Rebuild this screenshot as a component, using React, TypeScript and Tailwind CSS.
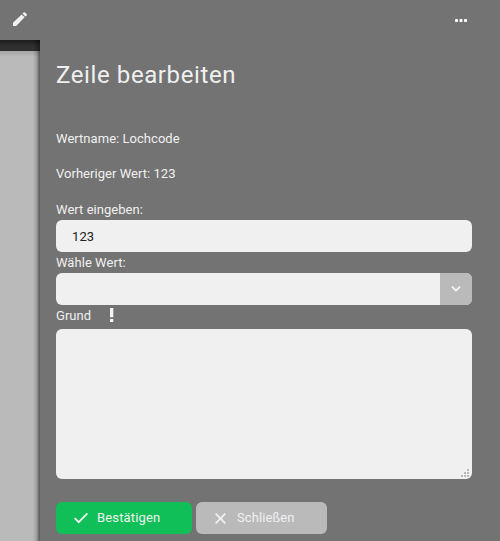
function PencilIcon() {
  return (
    <svg className="block h-[18px] w-[18px]" viewBox="0 0 18 18" fill="#f0f0f0">
      <path d="M2 12.7 10.6 4.4 13.6 7.3 5.2 16H2z" />
      <path d="m11.4 3.6 1.1-1.1c.5-.5 1-.5 1.5 0l1.6 1.6c.5.5.5 1 0 1.5l-1.1 1.1z" />
    </svg>
  );
}

function ResizeGrip() {
  return (
    <svg className="block h-[9px] w-[9px]" viewBox="0 0 9 9" fill="#b9b9b9" shapeRendering="crispEdges">
      <rect x="6" y="0" width="2" height="2" />
      <rect x="3" y="3" width="2" height="2" />
      <rect x="6" y="3" width="2" height="2" />
      <rect x="0" y="6" width="2" height="2" />
      <rect x="3" y="6" width="2" height="2" />
      <rect x="6" y="6" width="2" height="2" />
    </svg>
  );
}

export default function App() {
  return (
    <div className="flex h-[541px] w-[500px] overflow-hidden bg-[#737373] font-['Roboto',sans-serif] text-[13px] leading-4 tracking-[0.04px] text-[#f0f0f0]">
      <aside className="flex w-10 shrink-0 flex-col">
        <div className="h-10 pl-[11px] pt-[10px]">
          <PencilIcon />
        </div>
        <div className="flex h-[11px] justify-end bg-linear-to-b from-[#1c1c1c] to-[#303030] to-[6px]">
          <div className="w-[7px] bg-linear-to-r from-transparent to-black/40" />
        </div>
        <div className="flex flex-1 justify-end bg-linear-to-b from-[#a3a3a3] to-[#bababa] to-[6px]">
          <div className="w-[7px] bg-linear-to-r from-transparent via-black/15 via-50% to-black/55" />
        </div>
      </aside>
      <main className="flex flex-1 flex-col pl-4 pr-7">
        <div className="flex h-10 items-center justify-end pr-[5px]">
          <svg className="h-3 w-3" viewBox="0 0 12 12" fill="#ffffff">
            <rect x="0" y="5" width="3" height="3" rx="0.8" />
            <rect x="4.5" y="5" width="3" height="3" rx="0.8" />
            <rect x="9" y="5" width="3" height="3" rx="0.8" />
          </svg>
        </div>
        <h1 className="mt-[19px] h-8 text-2xl leading-8 tracking-[0.6px]">Zeile bearbeiten</h1>
        <p className="mt-10">Wertname: Lochcode</p>
        <p className="mt-[19px] tracking-[0.04px]">Vorheriger Wert: 123</p>
        <label className="mt-5 h-[18px]">Wert eingeben:</label>
        <div className="flex h-8 items-center rounded-md bg-[#f0f0f0] px-4 pt-[2px] tracking-[0.1px] text-[#222]">123</div>
        <label className="mt-[3px] h-[18px]">Wähle Wert:</label>
        <div className="flex h-8 overflow-hidden rounded-md bg-[#f0f0f0]">
          <div className="flex-1" />
          <div className="flex w-8 items-center justify-center bg-[#bababa]">
            <svg className="h-[10px] w-[10px]" viewBox="0 0 10 10" fill="none" stroke="#f5f5f5" strokeWidth="1.8">
              <path d="m.9 2.6 4.1 4 4.1-4" />
            </svg>
          </div>
        </div>
        <div className="mt-[3px] flex h-[21px]">
          <span className="w-[53px]">Grund</span>
          <svg className="h-4 w-[5px]" viewBox="0 0 5 16" fill="#f5f5f5">
            <path d="M1 0h3.3v9.3H1zM1 11h3.3v3H1z" />
          </svg>
        </div>
        <div className="flex h-[150px] items-end justify-end rounded-md bg-[#f0f0f0] pb-px pr-[2px]">
          <ResizeGrip />
        </div>
        <div className="mt-[23px] flex gap-1">
          <button className="flex h-8 w-[136px] items-center rounded-md bg-[#10bf57] pl-[18px] tracking-[0.15px]">
            <svg className="mr-[9px] h-3 w-[14px]" viewBox="0 0 14 12" fill="none" stroke="#f0f0f0" strokeWidth="1.8">
              <path d="m.7 6.2 4 4L13.4 1.4" />
            </svg>
            Bestätigen
          </button>
          <button className="flex h-8 w-[131px] items-center rounded-md bg-[#bababa] pl-[19px] tracking-[0.1px]">
            <svg className="mr-[11px] h-[11px] w-[11px]" viewBox="0 0 11 11" fill="none" stroke="#f0f0f0" strokeWidth="1.7">
              <path d="m.7.7 9.6 9.6M10.3.7.7 10.3" />
            </svg>
            Schließen
          </button>
        </div>
      </main>
    </div>
  );
}
